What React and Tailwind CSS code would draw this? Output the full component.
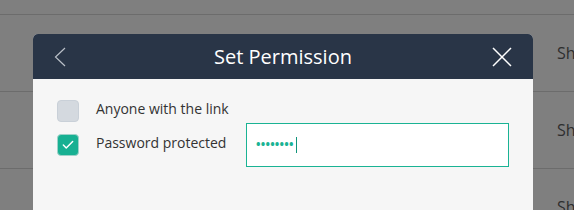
import { Check } from 'lucide-react'

const ROWS = [0, 1, 2]

function Checkbox({ checked }) {
  return checked ? (
    <div className="w-[22px] h-[22px] shrink-0 rounded-[4px] bg-[#17b092] border border-[#9fd2c9] flex items-center justify-center">
      <Check size={14} strokeWidth={2.5} className="text-white" />
    </div>
  ) : (
    <div className="w-[22px] h-[22px] shrink-0 rounded-[4px] bg-[#d4d9df] border border-[#c9d0d8]" />
  )
}

export default function App() {
  return (
    <div className="relative w-[574px] h-[210px] overflow-hidden bg-[#7f7f7f] font-['Open_Sans',sans-serif]">
      {/* table behind the overlay */}
      <div className="h-[15px] border-b border-[#6c6c6c]" />
      {ROWS.map(i => (
        <div key={i} className="h-[77px] border-b border-[#6c6c6c] flex items-center pl-[557px]">
          <span className="text-[16px] text-[#2e2e2e] whitespace-nowrap">Share</span>
        </div>
      ))}

      {/* modal */}
      <div className="absolute left-[33px] top-[34px] w-[500px] h-[200px] rounded-t-[5px] overflow-hidden bg-[#f6f6f6]">
        <div className="h-[45px] bg-[#293547] flex items-center justify-between px-[21px]">
          <svg width="12" height="20" viewBox="0 0 12 20" fill="none">
            <path d="M11 1 L1.5 10 L11 19" stroke="#b9bfc7" strokeWidth="1.2" />
          </svg>
          <span className="text-white text-[20px] leading-none pl-[8px]">Set Permission</span>
          <svg width="20" height="20" viewBox="0 0 20 20" fill="none">
            <path d="M1 1 L19 19 M19 1 L1 19" stroke="#ffffff" strokeWidth="1.5" />
          </svg>
        </div>

        <div className="flex flex-col gap-px pt-[21px] pl-[24px] pr-[24px]">
          <div className="flex items-center h-[22px]">
            <Checkbox />
            <span className="ml-[17px] mb-[5px] text-[14px] leading-[20px] text-[#333333]">Anyone with the link</span>
          </div>
          <div className="flex items-center">
            <Checkbox checked />
            <span className="ml-[17px] mb-[5px] w-[150px] text-[14px] leading-[20px] text-[#333333]">Password protected</span>
            <div className="flex-1 h-[44px] bg-white border border-[#1ab394] flex items-center pl-[9px]">
              <span className="text-[#1ab394] text-[12px] tracking-[0.2px] leading-none font-bold">••••••••</span>
              <span className="ml-[2px] w-px h-[16px] bg-[#11947a]" />
            </div>
          </div>
        </div>
      </div>
    </div>
  )
}
